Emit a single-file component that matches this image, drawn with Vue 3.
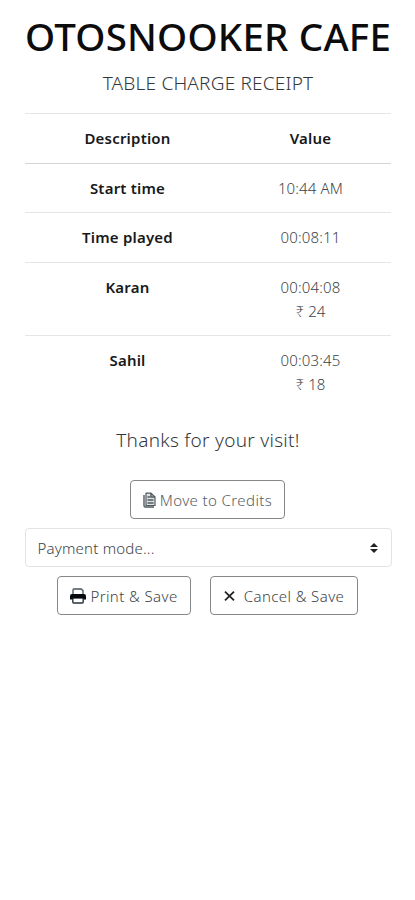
<script setup>
const rows = [
  { label: 'Start time', values: ['10:44 AM'] },
  { label: 'Time played', values: ['00:08:11'] },
  { label: 'Karan', values: ['00:04:08', '₹ 24'] },
  { label: 'Sahil', values: ['00:03:45', '₹ 18'] }
]
</script>

<template>
  <main class="receipt">
    <h1><span>OTOSNOOKER CAFE</span></h1>
    <p class="subtitle">TABLE CHARGE RECEIPT</p>
    <div class="table">
      <div class="row head">
        <div class="label">Description</div>
        <div class="label">Value</div>
      </div>
      <div v-for="(row, i) in rows" :key="row.label" class="row" :class="'r' + i">
        <div class="label">{{ row.label }}</div>
        <div class="value">
          <div v-for="v in row.values" :key="v">{{ v }}</div>
        </div>
      </div>
    </div>
    <p class="thanks">Thanks for your visit!</p>
    <button class="btn credits">
      <svg width="13" height="16" viewBox="0 0 13 16">
        <path d="M3 1.2h5L12 5v8.5H3z" fill="#dfe3e5" stroke="#50595e" stroke-width="1.2" stroke-linejoin="round" />
        <path d="M1 3v10.5q0 1.5 1.5 1.5H11M8 1v4h4M4.5 5H7M4.5 8h6M4.5 11h6" fill="none" stroke="#50595e" stroke-width="1.4" />
      </svg>
      <span>Move to Credits</span>
    </button>
    <div class="select">
      <span>Payment mode...</span>
      <svg width="8" height="10" viewBox="0 0 8 10"><path d="M0 4L4 0l4 4zM0 6h8l-4 4z" fill="#222" /></svg>
    </div>
    <div class="actions">
      <button class="btn print">
        <svg width="16" height="16" viewBox="0 0 16 16">
          <path d="M3 6V2q0-1 1-1h7.2L13 2.6V6" fill="#fff" stroke="#45525a" stroke-width="1.3" />
          <path d="M2 6h12q2 0 2 2v3.5h-2.5V10h-11v1.5H0V8q0-2 2-2z" fill="#050a0e" />
          <path d="M2.8 10v4q0 1 1 1h8.4q1 0 1-1v-4" fill="#fff" stroke="#25323a" stroke-width="1.4" />
          <path d="M2 9.8h12" stroke="#050a0e" stroke-width="1.6" />
        </svg>
        <span>Print &amp; Save</span>
      </button>
      <button class="btn cancel">
        <svg width="11" height="10" viewBox="0 0 11 10"><path d="M1 .7l9 8.6M10 .7L1 9.3" stroke="#222" stroke-width="1.8" /></svg>
        <span>Cancel &amp; Save</span>
      </button>
    </div>
  </main>
</template>

<style>
body {
  background: #fff;
}
</style>

<style scoped>
.receipt {
  box-sizing: border-box;
  width: 415px;
  height: 900px;
  padding: 12px 24px 0 25px;
  display: flex;
  flex-direction: column;
  align-items: center;
  font-family: "Noto Sans", "Open Sans", sans-serif;
  font-size: 15px;
  line-height: 24px;
  color: #33373a;
}
h1 {
  margin: 0;
  height: 48px;
  font-size: 38.5px;
  font-weight: 500;
  line-height: 48px;
  letter-spacing: 0.2px;
  white-space: nowrap;
  color: #0c0c0c;
}
.subtitle {
  margin: 9px 0 0;
  height: 28px;
  line-height: 28px;
  font-size: 19px;
  font-weight: 300;
  letter-spacing: 0.2px;
  white-space: nowrap;
}
.table {
  width: 366px;
  margin-top: 16px;
}
.row {
  box-sizing: border-box;
  display: grid;
  grid-template-columns: 205px 161px;
  min-height: 49px;
  padding: 12px 0;
  border-top: 1px solid #e3e6e8;
  text-align: center;
}
.row.head {
  min-height: 50px;
}
.row.r0 {
  border-top-color: #d3d6d8;
}
.row.r1 {
  min-height: 50px;
}
.label {
  font-size: 15px;
  font-weight: 600;
  letter-spacing: 0.2px;
  color: #17191b;
}
.value {
  font-size: 15px;
  font-weight: 300;
  letter-spacing: 0.15px;
  color: #404447;
}
.thanks {
  margin: 18px 0 0;
  height: 28px;
  line-height: 28px;
  font-size: 19px;
  font-weight: 300;
  letter-spacing: 0.28px;
}
.btn {
  box-sizing: border-box;
  height: 39px;
  padding: 0;
  display: flex;
  align-items: center;
  justify-content: center;
  border: 1px solid #84888b;
  border-radius: 4px;
  background: #fff;
  color: #404447;
  font: 300 15px/24px "Noto Sans", "Open Sans", sans-serif;
  letter-spacing: 0.4px;
  white-space: nowrap;
}
.credits {
  width: 155px;
  margin-top: 26px;
  margin-right: 1px;
  gap: 4px;
  color: #555e64;
}
.select {
  box-sizing: border-box;
  width: 367px;
  height: 39px;
  margin-top: 9px;
  padding: 0 12px;
  display: flex;
  align-items: center;
  justify-content: space-between;
  border: 1px solid #e1e4e6;
  border-radius: 4px;
  font-size: 15px;
  font-weight: 300;
  letter-spacing: 0.2px;
  color: #404447;
}
.select svg {
  margin-right: 1px;
}
.actions {
  display: flex;
  gap: 19px;
  margin-top: 9px;
  margin-right: 1px;
}
.print {
  width: 134px;
  gap: 4px;
}
.cancel {
  width: 148px;
  gap: 9px;
}
</style>
